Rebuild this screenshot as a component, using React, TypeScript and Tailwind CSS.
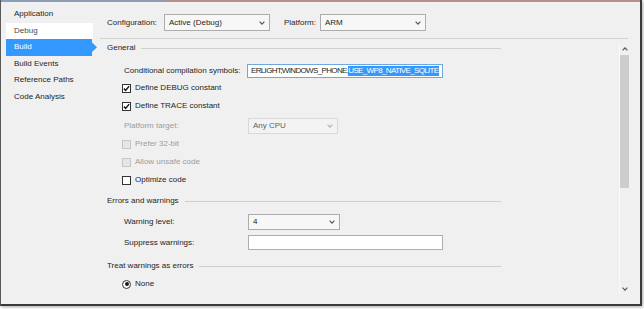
import React from "react";

const navItems = ["Application", "Debug", "Build", "Build Events", "Reference Paths", "Code Analysis"];

function Chevron({ className = "" }: { className?: string }) {
  return (
    <svg width="6" height="4" viewBox="0 0 6 4" className={className}>
      <path d="M0.6 0.6 L3 3.2 L5.4 0.6" fill="none" stroke="currentColor" strokeWidth="1.1" />
    </svg>
  );
}

function Select({ value, width, tall, disabled }: { value: string; width: string; tall?: boolean; disabled?: boolean }) {
  return (
    <div
      className={`flex items-center justify-between border px-[4px] ${width} ${tall ? "h-[17px]" : "h-[16px]"} ${
        disabled ? "border-[#d9d9d9] bg-[#f3f3f3] text-[#5f5f5f]" : "border-[#acacac] bg-[#f7f7f7] text-[#1e1e1e]"
      }`}
    >
      <span>{value}</span>
      <Chevron className={disabled ? "text-[#b0b0b0]" : "text-[#555555]"} />
    </div>
  );
}

function Check({ checked, disabled }: { checked?: boolean; disabled?: boolean }) {
  return (
    <div
      className={`flex h-[9px] w-[9px] items-center justify-center border ${
        disabled ? "border-[#c6c6c6] bg-[#e6e6e6]" : "border-[#333333] bg-white"
      }`}
    >
      {checked && (
        <svg width="7" height="7" viewBox="0 0 7 7">
          <path d="M0.9 3.6 L2.7 5.4 L6.1 1.1" fill="none" stroke="#1a1a1a" strokeWidth="1.5" />
        </svg>
      )}
    </div>
  );
}

function CheckRow({ label, checked, disabled, mt }: { label: string; checked?: boolean; disabled?: boolean; mt: string }) {
  return (
    <div className={`flex h-[12px] items-center gap-[4px] pl-[15px] ${mt}`}>
      <Check checked={checked} disabled={disabled} />
      <span className={disabled ? "text-[#9c9c9c]" : "text-[#1e1e1e]"}>{label}</span>
    </div>
  );
}

function GroupHeader({ title, mt = "" }: { title: string; mt?: string }) {
  return (
    <div className={`flex h-[10px] w-[394px] items-center ${mt}`}>
      <span className="text-[#1e1e1e]">{title}</span>
      <div className="ml-[6px] flex-1 border-t border-[#cfcfcf]" />
    </div>
  );
}

export default function App() {
  return (
    <div className="h-[309px] w-[644px] overflow-hidden bg-white font-['Liberation_Sans',Arial,sans-serif] text-[8px] leading-[10px]">
      <div className="flex h-[306px] w-[642px] flex-col border-b-2 border-l border-r-2 border-b-[#3a3a3a] border-l-[#5a5a5a] border-r-[#3a3a3a] bg-[#f0f0f0] shadow-[1px_1px_3px_rgba(0,0,0,0.35)]">
        {/* title strip */}
        <div className="flex h-[2px]">
          <div className="w-[165px] bg-[#8e9db6]" />
          <div className="flex-1 bg-[#b4928a]" />
        </div>

        <div className="flex flex-1">
          {/* left nav */}
          <div className="w-[99px] pt-[4px]">
            {navItems.map((item) => {
              if (item === "Build") {
                return (
                  <div key={item} className="ml-[5px] flex h-[16.5px]">
                    <div className="flex w-[86px] items-center bg-[#3399ff] pl-[8px] text-white">{item}</div>
                    <svg width="5" height="16.5" viewBox="0 0 5 16.5">
                      <path d="M0 3.5 L5 8.25 L0 13 Z" fill="#3399ff" />
                    </svg>
                  </div>
                );
              }
              return (
                <div
                  key={item}
                  className={`ml-[5px] flex h-[16.5px] w-[87px] items-center pl-[8px] ${
                    item === "Debug" ? "bg-white text-[#4a4a4a]" : "text-[#1e1e1e]"
                  }`}
                >
                  {item}
                </div>
              );
            })}
          </div>

          {/* main panel */}
          <div className="flex flex-1 flex-col">
            <div className="mt-[12px] flex h-[17px] items-center pl-[7px] text-[#1e1e1e]">
              <span className="w-[57px]">Configuration:</span>
              <Select value="Active (Debug)" width="w-[106px]" tall />
              <span className="ml-[14px] w-[36px]">Platform:</span>
              <Select value="ARM" width="w-[106px]" tall />
            </div>

            <div className="mr-[12px] mt-[7px] border-t border-[#d2d2d2]" />

            <div className="mt-[4px] flex h-[252px]">
              <div className="flex flex-1 flex-col pl-[7px]">
                <GroupHeader title="General" />

                <div className="mt-[10px] flex h-[15px] items-center pl-[17px]">
                  <span className="w-[123px] text-[#1e1e1e]">Conditional compilation symbols:</span>
                  <div className="flex h-[14px] w-[196px] items-center whitespace-nowrap border border-[#6fa7e0] bg-white pl-[3px] tracking-[-0.65px] text-[#1e1e1e]">
                    <span>ERLIGHT;WINDOWS_PHONE;</span>
                    <span className="bg-[#3399ff] text-white">USE_WP8_NATIVE_SQLITE</span>
                  </div>
                </div>

                <CheckRow label="Define DEBUG constant" checked mt="mt-[4px]" />
                <CheckRow label="Define TRACE constant" checked mt="mt-[6px]" />

                <div className="mt-[6px] flex h-[16px] items-center pl-[17px]">
                  <span className="w-[124px] text-[#9c9c9c]">Platform target:</span>
                  <Select value="Any CPU" width="w-[90px]" disabled />
                </div>

                <CheckRow label="Prefer 32-bit" disabled mt="mt-[4px]" />
                <CheckRow label="Allow unsafe code" disabled mt="mt-[6px]" />
                <CheckRow label="Optimize code" mt="mt-[6px]" />

                <GroupHeader title="Errors and warnings" mt="mt-[10px]" />

                <div className="mt-[8px] flex h-[16px] items-center pl-[17px]">
                  <span className="w-[124px] text-[#1e1e1e]">Warning level:</span>
                  <Select value="4" width="w-[92px]" />
                </div>

                <div className="mt-[5px] flex h-[15px] items-center pl-[17px]">
                  <span className="w-[124px] text-[#1e1e1e]">Suppress warnings:</span>
                  <div className="h-[15px] w-[195px] border border-[#abadb3] bg-white" />
                </div>

                <GroupHeader title="Treat warnings as errors" mt="mt-[11px]" />

                <div className="mt-[7px] flex h-[12px] items-center gap-[4px] pl-[15px]">
                  <div className="flex h-[9px] w-[9px] items-center justify-center rounded-full border border-[#333333] bg-white">
                    <div className="h-[4px] w-[4px] rounded-full bg-[#1a1a1a]" />
                  </div>
                  <span className="text-[#1e1e1e]">None</span>
                </div>
              </div>

              {/* scrollbar */}
              <div className="mr-[11px] flex w-[10px] flex-col border-l border-[#fafafa] bg-[#f0f0f0]">
                <div className="flex h-[12px] items-center justify-center text-[#555555]">
                  <svg width="6" height="4" viewBox="0 0 6 4">
                    <path d="M0.6 3.4 L3 0.8 L5.4 3.4" fill="none" stroke="currentColor" strokeWidth="1.1" />
                  </svg>
                </div>
                <div className="h-[133px] bg-[#cdcdcd]" />
                <div className="flex-1" />
                <div className="flex h-[12px] items-center justify-center">
                  <Chevron className="text-[#555555]" />
                </div>
              </div>
            </div>
          </div>
        </div>
      </div>
    </div>
  );
}
